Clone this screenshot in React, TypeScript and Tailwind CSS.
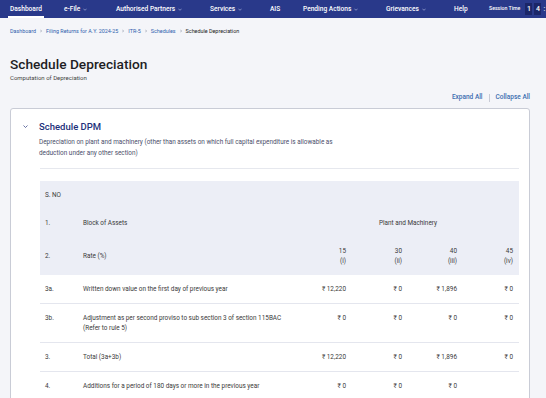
import React from "react";

const Chev = ({ className = "" }: { className?: string }) => (
  <svg viewBox="0 0 10 6" className={className} fill="none" stroke="currentColor" strokeWidth="1.4">
    <path d="M1 1l4 4 4-4" />
  </svg>
);

const NavItem = ({ label, dd, w, active }: { label: string; dd?: boolean; w: string; active?: boolean }) => (
  <div className={`h-full flex items-center shrink-0 ${w}`}>
    <span className="relative h-full flex items-center gap-[3px] text-white text-[6.6px] font-medium leading-none whitespace-nowrap">
      {label}
      {dd && <Chev className="w-[4px] h-[3px] text-[#c9d0ee]" />}
      {active && <span className="absolute left-[-2px] right-[-2px] bottom-0 h-[2px] bg-white" />}
    </span>
  </div>
);

type Row = { no: string; label: React.ReactNode; vals: string[] };

const rows: Row[] = [
  { no: "3a.", label: "Written down value on the first day of previous year", vals: ["₹ 12,220", "₹ 0", "₹ 1,896", "₹ 0"] },
  {
    no: "3b.",
    label: "Adjustment as per second proviso to sub section 3 of section 115BAC (Refer to rule 5)",
    vals: ["₹ 0", "₹ 0", "₹ 0", "₹ 0"],
  },
  { no: "3.", label: "Total (3a+3b)", vals: ["₹ 12,220", "₹ 0", "₹ 1,896", "₹ 0"] },
  { no: "4.", label: "Additions for a period of 180 days or more in the previous year", vals: ["₹ 0", "₹ 0", "₹ 0", ""] },
];

const grid = "grid grid-cols-[43px_214px_55px_56px_55px_56px]";

const Sep = () => (
  <svg viewBox="0 0 4 6" className="w-[2px] h-[4px] text-[#6a7388]" fill="none" stroke="currentColor" strokeWidth="1">
    <path d="M1 0.5l2 2.5-2 2.5" />
  </svg>
);

export default function App() {
  return (
    <div className="w-[546px] h-[398px] overflow-hidden bg-[#f4f5f9] font-['Roboto',sans-serif] text-[#333]">
      {/* Nav */}
      <div className="h-[18px] bg-[#29398a] flex items-stretch pl-[10px]">
        <NavItem label="Dashboard" w="w-[54px]" active />
        <NavItem label="e-File" dd w="w-[52px]" />
        <NavItem label="Authorised Partners" dd w="w-[94px]" />
        <NavItem label="Services" dd w="w-[60px]" />
        <NavItem label="AIS" w="w-[33px]" />
        <NavItem label="Pending Actions" dd w="w-[83px]" />
        <NavItem label="Grievances" dd w="w-[68px]" />
        <NavItem label="Help" w="w-[35px]" />
        <div className="flex items-center text-white shrink-0">
          <span className="text-[5.2px] font-medium whitespace-nowrap mr-[5px]">Session Time</span>
          <span className="bg-[#1b2668] text-[7px] font-medium w-[7px] h-[12px] flex items-center justify-center">1</span>
          <span className="bg-[#1b2668] text-[7px] font-medium w-[7px] h-[12px] flex items-center justify-center ml-[2px]">4</span>
          <span className="text-[7px] font-medium ml-[2px]">:</span>
        </div>
      </div>

      {/* Breadcrumb */}
      <div className="h-[26px] flex items-center pl-[10px] text-[5.4px] text-[#2f5fae] gap-[4px] whitespace-nowrap">
        <span>Dashboard</span>
        <Sep />
        <span>Filing Returns for A.Y. 2024-25</span>
        <Sep />
        <span>ITR-5</span>
        <Sep />
        <span>Schedules</span>
        <Sep />
        <span className="text-[#222]">Schedule Depreciation</span>
      </div>

      {/* Title */}
      <div className="pl-[10px] mt-[12px] text-[13.7px] leading-[16px] font-medium text-[#1e1e24]">Schedule Depreciation</div>
      <div className="pl-[10px] mt-[2px] text-[6px] leading-[8px] text-[#444]">Computation of Depreciation</div>

      {/* Expand / Collapse */}
      <div className="mt-[12px] h-[8px] flex items-center justify-end pr-[16px] text-[6.5px] font-medium text-[#3c6eb0] gap-[6px]">
        <span>Expand All</span>
        <span className="w-px h-[8px] bg-[#c8cbd6]" />
        <span>Collapse All</span>
      </div>

      {/* Card */}
      <div className="mt-[6px] ml-[10px] w-[520px] bg-white border border-[#c9ccd6] rounded-[3px] h-[400px]">
        <div className="flex pt-[11px] pl-[12px]">
          <Chev className="w-[5px] h-[3px] mt-[5px] text-[#2b3a7e]" />
          <div className="ml-[11px]">
            <div className="text-[9.5px] leading-[13px] font-medium text-[#22307a]">Schedule DPM</div>
            <div className="mt-[4px] text-[6.4px] leading-[11px] text-[#4b4f6b] w-[320px]">
              Depreciation on plant and machinery (other than assets on which full capital expenditure is allowable as
              deduction under any other section)
            </div>
          </div>
        </div>
        <div className="mt-[9px] ml-[29px] mr-[10px] h-px bg-[#e6e8ee]" />

        {/* Table */}
        <div className="mt-[12px] ml-[29px] mr-[10px] text-[6.4px] leading-[10px] text-[#3a3a3a]">
          <div className="bg-[#eceef6]">
            <div className={`${grid} py-[9px]`}>
              <div className="pl-[5px]">S. NO</div>
            </div>
            <div className={`${grid} py-[9px]`}>
              <div className="pl-[5px]">1.</div>
              <div>Block of Assets</div>
              <div className="col-span-4 text-center">Plant and Machinery</div>
            </div>
            <div className={`${grid} py-[9px] items-center`}>
              <div className="pl-[5px]">2.</div>
              <div>Rate (%)</div>
              <div className="text-right pr-[6px]">15<br />(i)</div>
              <div className="text-right pr-[6px]">30<br />(ii)</div>
              <div className="text-right pr-[6px]">40<br />(iii)</div>
              <div className="text-right pr-[6px]">45<br />(iv)</div>
            </div>
          </div>
          {rows.map((r) => (
            <div key={r.no} className={`${grid} py-[9px] border-b border-[#e4e6ee]`}>
              <div className="pl-[5px]">{r.no}</div>
              <div className="pr-[8px]">{r.label}</div>
              {r.vals.map((v, i) => (
                <div key={i} className="text-right pr-[6px]">{v}</div>
              ))}
            </div>
          ))}
        </div>
      </div>
    </div>
  );
}
